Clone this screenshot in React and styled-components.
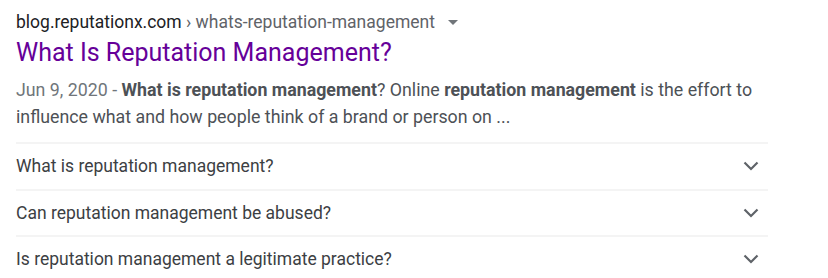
import React from 'react';
import styled, {createGlobalStyle} from "styled-components"

const GlobalStyle = createGlobalStyle`
  body {
    margin: 0;
    background: #fff;
    font-family: Roboto, "Liberation Sans", sans-serif;
  }
`
const Result = styled.div`
  width: 752px;
  padding: 11px 0 0 16px;
`
const UrlLine = styled.div`
  display: flex;
  align-items: center;
  font-size: 17.5px;
  line-height: 22px;
  color: #202124;
`
const Crumb = styled.span`
  color: #5f6368;
`
const Arrow = styled.span`
  display: inline-block;
  margin-left: 13px;
  width: 0;
  height: 0;
  border-left: 5px solid transparent;
  border-right: 5px solid transparent;
  border-top: 5px solid #70757a;
`
const Title = styled.a`
  display: block;
  font-size: 25px;
  line-height: 30px;
  color: #660099;
  text-decoration: none;
  margin-top: 5px;
`
const Snippet = styled.div`
  font-size: 17.8px;
  line-height: 27px;
  color: #4d5156;
  margin-top: 8px;
`
const Date = styled.span`
  color: #70757a;
`
const Faq = styled.div`
  margin-top: 12px;
`
const Row = styled.div`
  display: flex;
  align-items: center;
  justify-content: space-between;
  height: 44.5px;
  border-top: 2px solid #f4f4f4;
  font-size: 17.5px;
  color: #3c4043;
  padding-right: 9px;
`

const Chevron = () => (
    <svg width="16" height="10" viewBox="0 0 16 10">
        <polyline points="1.5,1.5 8,8 14.5,1.5" fill="none" stroke="#5f6368" strokeWidth="2.2"/>
    </svg>
)

const questions = [
    "What is reputation management?",
    "Can reputation management be abused?",
    "Is reputation management a legitimate practice?",
]

const App = () => {
    return (
        <>
            <GlobalStyle/>
            <Result>
                <UrlLine>
                    blog.reputationx.com<Crumb>&nbsp;› whats-reputation-management</Crumb>
                    <Arrow/>
                </UrlLine>
                <Title href="#">What Is Reputation Management?</Title>
                <Snippet>
                    <Date>Jun 9, 2020 - </Date>
                    <b>What is reputation management</b>? Online <b>reputation management</b> is the effort to
                    influence what and how people think of a brand or person on ...
                </Snippet>
                <Faq>
                    {questions.map((q) => (
                        <Row key={q}>
                            <span>{q}</span>
                            <Chevron/>
                        </Row>
                    ))}
                </Faq>
            </Result>
        </>
    );
};

export default App;
